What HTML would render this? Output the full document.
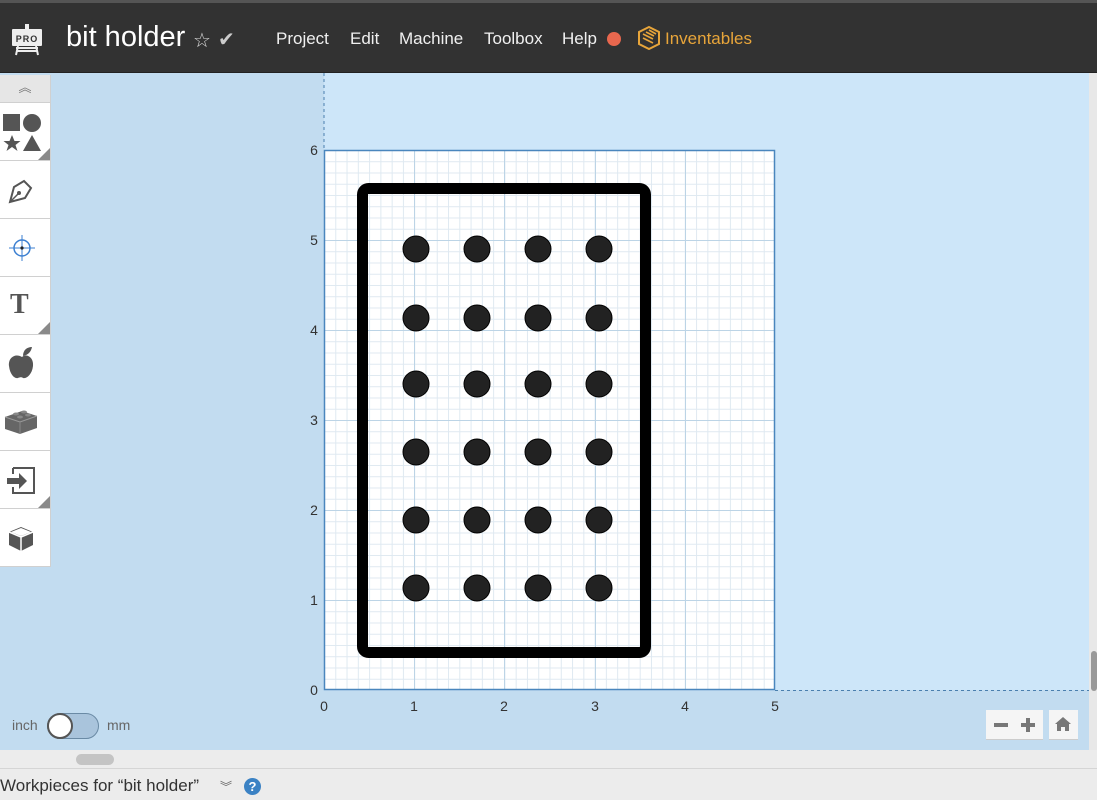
<!DOCTYPE html>
<html><head><meta charset="utf-8"><style>
*{margin:0;padding:0;box-sizing:border-box}
body{width:1097px;height:800px;overflow:hidden;background:#ececec;font-family:"Liberation Sans",sans-serif;position:relative}
.hdr{position:absolute;left:0;top:0;width:1097px;height:73px;background:#323232;border-top:3px solid #555;border-bottom:1px solid #222}
.hdr .t{position:absolute;color:#fff}
.menu{position:absolute;top:26px;color:#f0f0f0;font-size:17px}
.tb{position:absolute;left:0;width:51px;background:#fff;border-bottom:1px solid #d0d0d0;border-right:1px solid #d0d0d0}
.tri{position:absolute;right:0;bottom:0;width:0;height:0;border-left:12px solid transparent;border-bottom:12px solid #8a8a8a}
</style></head><body>
<div class="hdr">
 <svg style="position:absolute;left:10px;top:19px" width="34" height="34" viewBox="0 0 34 34">
  <rect x="15" y="2" width="4" height="5" fill="#eee"/>
  <rect x="2" y="7" width="30" height="17" rx="1" fill="#eee"/>
  <text x="17" y="20" font-size="9" font-weight="bold" text-anchor="middle" fill="#333" font-family="Liberation Sans" letter-spacing="1">PRO</text>
  <path d="M6 26h22M6 29h22M8 24l-2 9M26 24l2 9" stroke="#eee" stroke-width="2" fill="none"/>
 </svg>
 <div class="t" style="left:66px;top:18px;font-size:29px">bit holder</div>
 <div class="t" style="left:193px;top:25px;font-size:20px;color:#ddd">☆</div>
 <div class="t" style="left:218px;top:24px;font-size:20px;color:#ccc">✔</div>
 <div class="menu" style="left:276px">Project</div>
 <div class="menu" style="left:350px">Edit</div>
 <div class="menu" style="left:399px">Machine</div>
 <div class="menu" style="left:484px">Toolbox</div>
 <div class="menu" style="left:562px">Help</div>
 <div style="position:absolute;left:607px;top:29px;width:14px;height:14px;border-radius:50%;background:#e8674e"></div>
 <svg style="position:absolute;left:637px;top:23px" width="24" height="24" viewBox="0 0 24 24"><path d="M12 1L22 6v12l-10 5L2 18V6z" fill="none" stroke="#e8a53a" stroke-width="2"/><path d="M6 8l10 5M6 12l10 5M9 6l8 4M12 4l7 4" stroke="#e8a53a" stroke-width="1.6"/></svg>
 <div class="menu" style="left:665px;color:#e8a53a">Inventables</div>
</div>

<div style="position:absolute;left:0;top:73px;width:1089px;height:677px;background:#c2dcf0"></div>
<div style="position:absolute;left:324px;top:73px;width:765px;height:617px;background:#cde6f9"></div>
<div style="position:absolute;left:1089px;top:73px;width:8px;height:677px;background:#e8e8e8"></div>
<div style="position:absolute;left:1091px;top:651px;width:6px;height:40px;background:#999;border-radius:3px"></div>

<svg style="position:absolute;left:0;top:0" width="1097" height="800">
 <defs>
  <pattern id="g" x="324" y="150" width="11.275" height="11.25" patternUnits="userSpaceOnUse">
   <path d="M0 0.5H12M0.5 0V12" stroke="#dfe9f1" stroke-width="1"/>
  </pattern>
 </defs>
 <line x1="324" y1="73" x2="324" y2="150" stroke="#4a7fae" stroke-dasharray="3,3"/>
 <line x1="775" y1="690.5" x2="1089" y2="690.5" stroke="#4a7fae" stroke-dasharray="3,3"/>
 <rect x="324" y="150" width="451" height="540" fill="#fff"/>
 <rect x="324" y="150" width="451" height="540" fill="url(#g)"/>
 <g stroke="#bcd4e6" stroke-width="1">
  <line x1="414.5" y1="150" x2="414.5" y2="690"/><line x1="504.5" y1="150" x2="504.5" y2="690"/><line x1="595.5" y1="150" x2="595.5" y2="690"/><line x1="685.5" y1="150" x2="685.5" y2="690"/>
  <line x1="324" y1="240.5" x2="775" y2="240.5"/><line x1="324" y1="330.5" x2="775" y2="330.5"/><line x1="324" y1="420.5" x2="775" y2="420.5"/><line x1="324" y1="510.5" x2="775" y2="510.5"/><line x1="324" y1="600.5" x2="775" y2="600.5"/>
 </g>
 <rect x="324.5" y="150.5" width="450" height="539" fill="none" stroke="#4a86bd" stroke-width="1.5"/>
 <rect x="362.5" y="188.5" width="283" height="464" rx="6" fill="none" stroke="#000" stroke-width="11"/>
 <g fill="#222" stroke="#000" stroke-width="1">
  <circle cx="416" cy="249" r="13"/><circle cx="477" cy="249" r="13"/><circle cx="538" cy="249" r="13"/><circle cx="599" cy="249" r="13"/>
  <circle cx="416" cy="318" r="13"/><circle cx="477" cy="318" r="13"/><circle cx="538" cy="318" r="13"/><circle cx="599" cy="318" r="13"/>
  <circle cx="416" cy="384" r="13"/><circle cx="477" cy="384" r="13"/><circle cx="538" cy="384" r="13"/><circle cx="599" cy="384" r="13"/>
  <circle cx="416" cy="452" r="13"/><circle cx="477" cy="452" r="13"/><circle cx="538" cy="452" r="13"/><circle cx="599" cy="452" r="13"/>
  <circle cx="416" cy="520" r="13"/><circle cx="477" cy="520" r="13"/><circle cx="538" cy="520" r="13"/><circle cx="599" cy="520" r="13"/>
  <circle cx="416" cy="588" r="13"/><circle cx="477" cy="588" r="13"/><circle cx="538" cy="588" r="13"/><circle cx="599" cy="588" r="13"/>
 </g>
 <g font-family="Liberation Sans" font-size="14" fill="#333" text-anchor="middle">
  <text x="324" y="711">0</text><text x="414" y="711">1</text><text x="504" y="711">2</text><text x="595" y="711">3</text><text x="685" y="711">4</text><text x="775" y="711">5</text>
  <text x="314" y="695">0</text><text x="314" y="605">1</text><text x="314" y="515">2</text><text x="314" y="425">3</text><text x="314" y="335">4</text><text x="314" y="245">5</text><text x="314" y="155">6</text>
 </g>
</svg>

<div class="tb" style="top:75px;height:28px;background:#e6e6e6;text-align:center;color:#777;font-size:13px;line-height:26px">︽</div>
<div class="tb" style="top:103px;height:58px"><svg width="50" height="58"><rect x="3" y="11" width="17" height="17" fill="#555"/><circle cx="32" cy="20" r="9" fill="#555"/><path d="M12 32l2.5 6h6l-5 4 2 6-5.5-4-5.5 4 2-6-5-4h6z" fill="#555"/><path d="M32 32l9 16H23z" fill="#555"/></svg><div class="tri"></div></div>
<div class="tb" style="top:161px;height:58px"><svg width="50" height="58"><path d="M10 41l4-15 10-6 7 7-6 10z" fill="none" stroke="#555" stroke-width="2"/><circle cx="19" cy="32" r="2" fill="#555"/><path d="M10 41l8-8" stroke="#555" stroke-width="1.5"/></svg></div>
<div class="tb" style="top:219px;height:58px"><svg width="50" height="58"><circle cx="22" cy="29" r="8" fill="none" stroke="#3b7fd1" stroke-width="1.5"/><path d="M22 16v26M9 29h26" stroke="#3b7fd1" stroke-width="1"/><circle cx="22" cy="29" r="1.6" fill="#222"/></svg></div>
<div class="tb" style="top:277px;height:58px;font-family:'Liberation Serif',serif;font-size:28px;color:#555;font-weight:bold;padding:12px 0 0 10px">T<div class="tri"></div></div>
<div class="tb" style="top:335px;height:58px"><svg width="50" height="58"><path d="M22 22c-6-4-14 0-13 9 1 9 6 13 9 12 2-1 4-1 5 0 3 1 9-3 10-12 1-9-7-13-11-9z" fill="#555"/><path d="M23 21c0-6 4-9 9-9-1 5-4 8-9 9z" fill="#555"/></svg></div>
<div class="tb" style="top:393px;height:58px"><svg width="50" height="58"><path d="M5 24l17-6 15 5v12l-17 6-15-5z" fill="#666"/><path d="M5 24l15 5 17-6" fill="none" stroke="#999" stroke-width="1"/><path d="M20 29v12" stroke="#888"/><ellipse cx="16" cy="21" rx="3" ry="1.5" fill="#888"/><ellipse cx="24" cy="19" rx="3" ry="1.5" fill="#888"/><ellipse cx="20" cy="24" rx="3" ry="1.5" fill="#888"/><ellipse cx="28" cy="22" rx="3" ry="1.5" fill="#888"/></svg></div>
<div class="tb" style="top:451px;height:58px"><svg width="50" height="58"><path d="M13 17h21v25H13v-6" fill="none" stroke="#555" stroke-width="2"/><path d="M13 17v6" stroke="#555" stroke-width="2"/><path d="M7 27h12v-5l8 8-8 8v-5H7z" fill="#555"/></svg><div class="tri"></div></div>
<div class="tb" style="top:509px;height:58px"><svg width="50" height="58"><path d="M21 18l12 5v13l-12 6-12-6V23z" fill="#555"/><path d="M9 23l12 5 12-5M21 28v14" stroke="#fff" stroke-width="1.5" fill="none"/><path d="M11 23l10-4 10 4-10 4z" fill="#fff"/></svg></div>

<div style="position:absolute;left:12px;top:717px;font-size:14px;color:#666">inch</div>
<div style="position:absolute;left:47px;top:713px;width:52px;height:26px;border-radius:13px;background:#a9c4dc;border:1px solid #6a8aa5"></div>
<div style="position:absolute;left:47px;top:713px;width:26px;height:26px;border-radius:50%;background:#fff;border:2px solid #555"></div>
<div style="position:absolute;left:107px;top:717px;font-size:14px;color:#666">mm</div>

<div style="position:absolute;left:986px;top:710px;width:57px;height:30px;background:#f5f5f5;border-bottom:1px solid #ccc"></div>
<div style="position:absolute;left:994px;top:723px;width:14px;height:4px;background:#777"></div>
<div style="position:absolute;left:1021px;top:723px;width:14px;height:4px;background:#777"></div>
<div style="position:absolute;left:1026px;top:718px;width:4px;height:14px;background:#777"></div>
<div style="position:absolute;left:1049px;top:710px;width:29px;height:30px;background:#f5f5f5;border-bottom:1px solid #ccc"></div>
<svg style="position:absolute;left:1054px;top:716px" width="18" height="16"><path d="M9 1l8 7h-2v7h-4v-4H7v4H3V8H1z" fill="#777"/></svg>

<div style="position:absolute;left:76px;top:754px;width:38px;height:11px;border-radius:6px;background:#c4c4c4"></div>
<div style="position:absolute;left:0;top:768px;width:1097px;height:1px;background:#d5d5d5"></div>
<div style="position:absolute;left:0;top:776px;font-size:17px;color:#333">Workpieces for “bit holder”</div>
<div style="position:absolute;left:220px;top:778px;font-size:12px;color:#666">︾</div>
<div style="position:absolute;left:244px;top:778px;width:17px;height:17px;border-radius:50%;background:#3b82c4;color:#fff;font-size:13px;font-weight:bold;text-align:center;line-height:17px">?</div>
</body></html>
